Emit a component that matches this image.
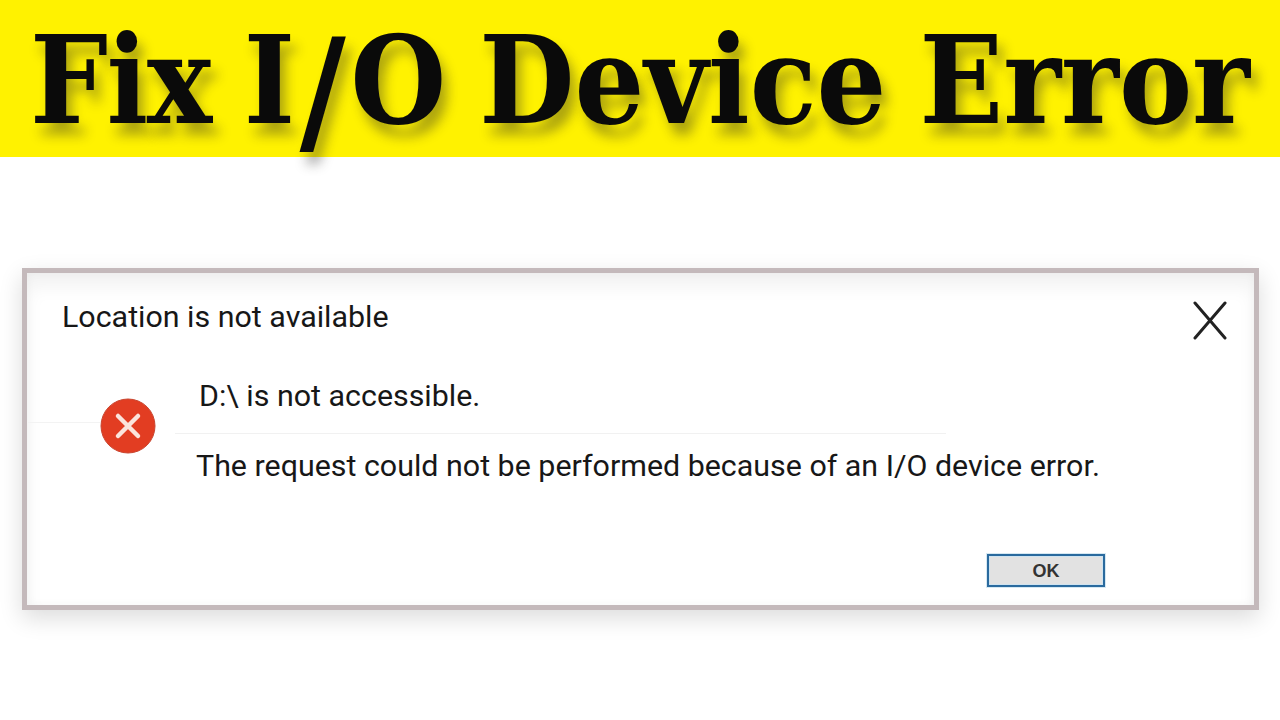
<script lang="ts">
    const words = ['Fix', 'I', 'O', 'Device', 'Error'];
</script>

<div class="page">
    <header class="banner">
        <h1><span class="tight">{words[0]}</span> {words[1]}<span class="slash">/</span>{words[2]} {words[3]} {words[4]}</h1>
    </header>

    <section class="dialog">
        <div class="top-row">
            <h2>Location is not available</h2>
            <svg class="close" viewBox="0 0 34 40" width="34" height="40" aria-label="Close">
                <path d="M2 2 L32 37 M32 2 L2 37" fill="none" stroke="#222" stroke-width="3" stroke-linecap="round" />
            </svg>
        </div>

        <div class="message">
            <svg class="error-icon" viewBox="0 0 56 56" width="56" height="56" aria-label="Error">
                <circle cx="28" cy="28" r="27" fill="#e23d22" stroke="#c9452f" stroke-width="1" />
                <path d="M18 18 L38 38 M38 18 L18 38" fill="none" stroke="#fbe4dc" stroke-width="4.5" stroke-linecap="round" />
            </svg>
            <div class="copy">
                <p class="path">D:\ is not accessible.</p>
                <p class="detail">The request could not be performed because of an I/O device error.</p>
            </div>
        </div>

        <div class="actions">
            <button type="button">OK</button>
        </div>
    </section>
</div>

<style>
    :global(body) {
        background: #fff;
    }
    .page {
        width: 1280px;
        height: 720px;
        overflow: hidden;
        background: #fff;
    }
    .banner {
        height: 157px;
        background: #fff200;
        display: flex;
        justify-content: center;
    }
    h1 {
        margin: 0;
        padding-top: 5px;
        height: 152px;
        font-family: "DejaVu Serif", serif;
        font-stretch: condensed;
        font-weight: 700;
        font-size: 122px;
        line-height: 150px;
        word-spacing: -5px;
        white-space: nowrap;
        color: #0a0a0a;
        text-shadow: 6px 12px 12px rgba(40, 40, 40, 0.38);
    }
    .tight {
        letter-spacing: -1.5px;
    }
    .slash {
        font-size: 141px;
        line-height: 0;
        vertical-align: -16px;
        margin: 0 4.5px;
    }
    .dialog {
        box-sizing: border-box;
        width: 1237px;
        height: 342px;
        margin: 111px 0 0 22px;
        border: 5px solid #c4b9bb;
        background: #fff;
        box-shadow: 0 8px 22px rgba(0, 0, 0, 0.14), inset 0 14px 18px rgba(0, 0, 0, 0.05), inset 0 0 10px rgba(0, 0, 0, 0.04);
        display: flex;
        flex-direction: column;
        padding: 22px 27px 18px 35px;
        font-family: Roboto, sans-serif;
        color: #171717;
    }
    .top-row {
        display: flex;
        justify-content: space-between;
        align-items: flex-start;
    }
    h2 {
        margin: 0;
        font-weight: 400;
        font-size: 30.4px;
        line-height: 44px;
    }
    .close {
        margin-top: 6px;
    }
    .message {
        display: flex;
        align-items: flex-start;
        gap: 40px;
        padding-left: 38px;
        margin-top: 33px;
        position: relative;
    }
    /* faint scan line left of the icon */
    .message::before {
        content: "";
        position: absolute;
        left: -34px;
        top: 48px;
        width: 72px;
        border-top: 1px solid #f3f3f3;
    }
    .error-icon {
        margin-top: 24px;
        flex: none;
    }
    .copy {
        flex: 1;
    }
    p {
        margin: 0;
        font-size: 30.4px;
        line-height: 44px;
    }
    .path {
        margin-left: -21px;
        padding-left: 24px;
        padding-bottom: 15px;
        border-bottom: 1px solid #f1f1f1;
        margin-right: 281px;
    }
    .detail {
        margin-top: 10px;
    }
    .actions {
        margin-top: auto;
        display: flex;
        justify-content: flex-end;
        padding-right: 122px;
    }
    button {
        width: 118px;
        height: 33px;
        padding: 2px 0 0;
        border: 2px solid #2a6a9e;
        background: #e2e2e2;
        box-shadow: 0 0 0 1px #d6e8f2, inset 0 0 0 1px #cfe3f0;
        font-family: "Liberation Sans", sans-serif;
        font-weight: 700;
        font-size: 18px;
        color: #333;
    }
</style>
